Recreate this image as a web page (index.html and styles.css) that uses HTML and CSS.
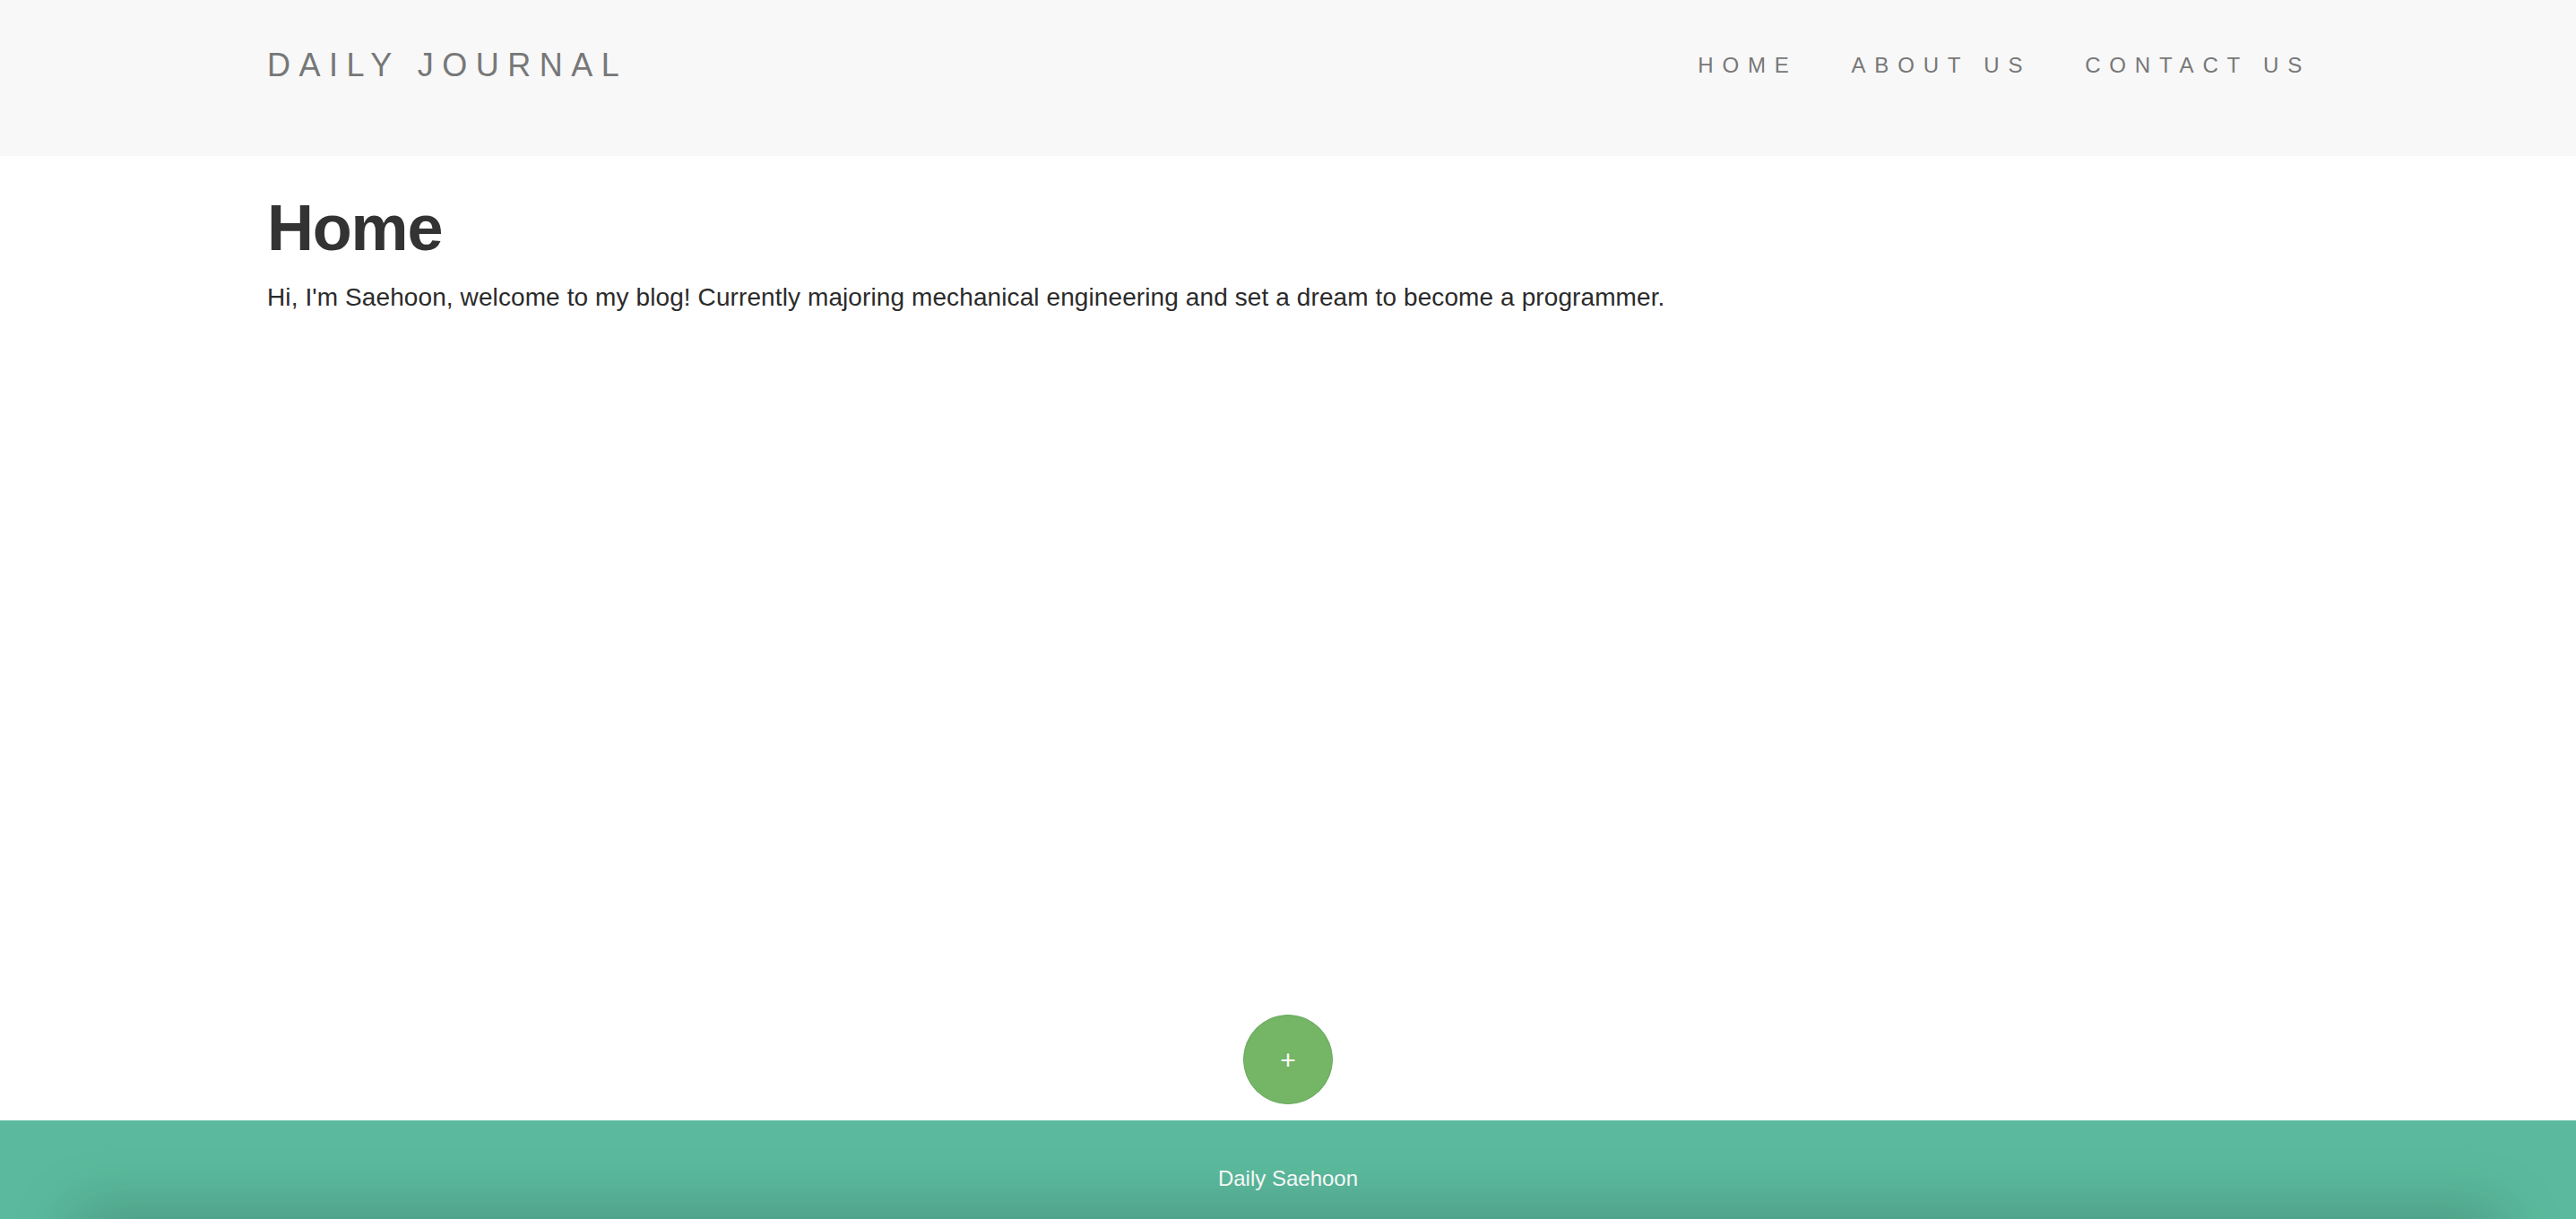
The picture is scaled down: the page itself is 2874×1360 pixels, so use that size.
FILE: index.html
```html
<!DOCTYPE html>
<html lang="en">
<head>
<meta charset="utf-8">
<title>Daily Journal</title>
<link rel="stylesheet" href="styles.css">
</head>
<body>
<header class="site-header">
  <div class="container header-row">
    <a class="brand" href="#">DAILY JOURNAL</a>
    <nav class="nav">
      <a class="nav-link" href="#">HOME</a>
      <a class="nav-link" href="#">ABOUT US</a>
      <a class="nav-link" href="#">CONTACT US</a>
    </nav>
  </div>
</header>
<main class="main">
  <div class="container">
    <h1 class="title">Home</h1>
    <p class="intro">Hi, I'm Saehoon, welcome to my blog! Currently majoring mechanical engineering and set a dream to become a programmer.</p>
  </div>
</main>
<div class="compose-row">
  <button class="compose-btn" type="button">+</button>
</div>
<footer class="site-footer">
  <p class="footer-text">Daily Saehoon</p>
</footer>
</body>
</html>
```

FILE: styles.css
```css
* { box-sizing: border-box; }

html, body { margin: 0; padding: 0; }

body {
  min-height: 100vh;
  display: flex;
  flex-direction: column;
  font-family: "Liberation Sans", Arial, Helvetica, sans-serif;
  color: #333;
  background: #fff;
}

.container {
  width: 2340px;
  margin: 0 auto;
  padding: 0 30px 0 31px;
}

.site-header {
  background: #f8f8f8;
  height: 174px;
}

.header-row {
  height: 146px;
  display: flex;
  align-items: center;
  justify-content: space-between;
}

.brand {
  font-size: 36px;
  letter-spacing: 9.5px;
  color: #777;
  text-decoration: none;
  line-height: 1;
}

.nav {
  display: flex;
  gap: 60px;
  margin-right: -1px;
}

.nav-link {
  font-size: 24px;
  letter-spacing: 9.8px;
  color: #777;
  text-decoration: none;
  line-height: 1;
}

.main {
  flex: 1;
}

.title {
  font-size: 72px;
  font-weight: 700;
  letter-spacing: -1.2px;
  line-height: 1.1;
  margin: 41px 0 18px;
  color: #333;
}

.intro {
  font-size: 28px;
  letter-spacing: 0.1px;
  line-height: 1.42857;
  margin: 0;
  color: #2b2b2b;
}

.compose-row {
  display: flex;
  justify-content: center;
  margin-bottom: 18px;
}

.compose-btn {
  width: 100px;
  height: 100px;
  border-radius: 50%;
  background: #74b566;
  border: 1px solid #68aa5c;
  color: #fff;
  font-family: "Liberation Sans", Arial, sans-serif;
  font-size: 30px;
  line-height: 1;
  padding: 0;
  padding-top: 2px;
  cursor: pointer;
}

.site-footer {
  position: relative;
  height: 110px;
  background: #5bba9d;
  text-align: center;
  padding-top: 48px;
}

.site-footer::after {
  content: "";
  position: absolute;
  left: 90px;
  right: 90px;
  top: 100%;
  height: 60px;
  box-shadow: 0 0 70px 10px rgba(0, 0, 0, 0.2);
}

.footer-text {
  margin: 0;
  font-size: 24px;
  line-height: 1.42857;
  color: #fff;
}
```
